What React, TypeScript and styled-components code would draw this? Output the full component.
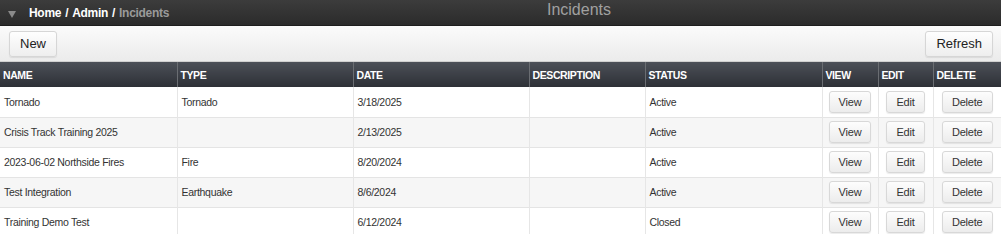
import styled, { createGlobalStyle } from "styled-components";

interface Incident {
  name: string;
  type: string;
  date: string;
  description: string;
  status: string;
}

const incidents: Incident[] = [
  { name: "Tornado", type: "Tornado", date: "3/18/2025", description: "", status: "Active" },
  { name: "Crisis Track Training 2025", type: "", date: "2/13/2025", description: "", status: "Active" },
  { name: "2023-06-02 Northside Fires", type: "Fire", date: "8/20/2024", description: "", status: "Active" },
  { name: "Test Integration", type: "Earthquake", date: "8/6/2024", description: "", status: "Active" },
  { name: "Training Demo Test", type: "", date: "6/12/2024", description: "", status: "Closed" },
];

const columns = [
  { label: "NAME", width: 177 },
  { label: "TYPE", width: 176 },
  { label: "DATE", width: 176 },
  { label: "DESCRIPTION", width: 116 },
  { label: "STATUS", width: 177 },
  { label: "VIEW", width: 56 },
  { label: "EDIT", width: 55 },
  { label: "DELETE", width: 68 },
];

const App = () => {
  return (
    <>
      <GlobalStyle />
      <Page>
        <TopBar>
          <Crumbs>
            <Caret />
            <Crumb>Home</Crumb>
            <Sep>/</Sep>
            <Crumb>Admin</Crumb>
            <Sep>/</Sep>
            <Crumb $current>Incidents</Crumb>
          </Crumbs>
          <Title>Incidents</Title>
        </TopBar>

        <Toolbar>
          <ToolButton>New</ToolButton>
          <ToolButton>Refresh</ToolButton>
        </Toolbar>

        <Table>
          <colgroup>
            {columns.map((c) => (
              <col key={c.label} style={{ width: c.width }} />
            ))}
          </colgroup>
          <thead>
            <tr>
              {columns.map((c) => (
                <HeadCell key={c.label}>{c.label}</HeadCell>
              ))}
            </tr>
          </thead>
          <tbody>
            {incidents.map((item, i) => (
              <Row key={item.name} $striped={i % 2 === 1}>
                <Cell>{item.name}</Cell>
                <Cell>{item.type}</Cell>
                <Cell>{item.date}</Cell>
                <Cell>{item.description}</Cell>
                <Cell>{item.status}</Cell>
                <ActionCell>
                  <RowButton>View</RowButton>
                </ActionCell>
                <ActionCell>
                  <RowButton>Edit</RowButton>
                </ActionCell>
                <ActionCell>
                  <RowButton>Delete</RowButton>
                </ActionCell>
              </Row>
            ))}
          </tbody>
        </Table>
      </Page>
    </>
  );
};

export default App;

const GlobalStyle = createGlobalStyle`
  body {
    margin: 0;
    background: #ffffff;
    font-family: "Liberation Sans", Arial, sans-serif;
  }
`;

const Page = styled.div`
  width: 1001px;
  height: 234px;
  overflow: hidden;
`;

const TopBar = styled.div`
  position: relative;
  height: 25px;
  display: flex;
  align-items: center;
  background: linear-gradient(#3c3c3c, #2b2b2b);
  border-bottom: 1px solid #1e1e1e;
`;

const Crumbs = styled.div`
  display: flex;
  align-items: center;
  gap: 4px;
  padding-left: 8px;
  font-size: 12px;
  letter-spacing: -0.3px;
  font-weight: bold;
`;

const Caret = styled.span`
  width: 0;
  height: 0;
  margin: 3px 9px 0 0;
  border-left: 4px solid transparent;
  border-right: 4px solid transparent;
  border-top: 7px solid #8a8a8a;
`;

const Crumb = styled.span<{ $current?: boolean }>`
  color: ${({ $current }) => ($current ? "#9a9a9a" : "#ffffff")};
`;

const Sep = styled.span`
  color: #ffffff;
`;

const Title = styled.div`
  position: absolute;
  left: 0;
  right: 0;
  top: 0;
  padding-left: 157px;
  text-align: center;
  font-size: 16px;
  line-height: 20px;
  color: #a0a0a0;
  pointer-events: none;
`;

const Toolbar = styled.div`
  height: 35px;
  display: flex;
  align-items: center;
  justify-content: space-between;
  padding: 0 8px 0 9px;
  background: linear-gradient(#fbfbfb, #ebebeb);
  border-bottom: 1px solid #d0d0d0;
`;

const ToolButton = styled.button`
  height: 26px;
  padding: 0 10px;
  font-family: "Liberation Sans", Arial, sans-serif;
  font-size: 13px;
  color: #222222;
  background: linear-gradient(#fefefe, #eeeeee);
  border: 1px solid #d6d6d6;
  border-radius: 3px;
  box-shadow: 0 1px 1px rgba(0, 0, 0, 0.08);
`;

const Table = styled.table`
  width: 1001px;
  table-layout: fixed;
  border-collapse: collapse;
  font-size: 10.5px;
  letter-spacing: -0.3px;
`;

const HeadCell = styled.th`
  height: 25px;
  padding: 0 3px;
  text-align: left;
  font-weight: bold;
  letter-spacing: -0.4px;
  color: #ffffff;
  background: linear-gradient(#4c5058, #2d3036);
  border-left: 1px solid #6a6d72;
  white-space: nowrap;

  &:first-child {
    border-left: none;
  }
`;

const Row = styled.tr<{ $striped: boolean }>`
  height: 30px;
  background: ${({ $striped }) => ($striped ? "#f6f6f6" : "#ffffff")};
  border-bottom: 1px solid #e4e4e4;
`;

const Cell = styled.td`
  padding: 0 4px;
  color: #333333;
  border-left: 1px solid #e6e6e6;
  white-space: nowrap;

  &:first-child {
    border-left: none;
  }
`;

const ActionCell = styled.td`
  padding: 0;
  text-align: center;
  border-left: 1px solid #e6e6e6;
`;

const RowButton = styled.button`
  height: 22px;
  padding: 0 9px;
  font-family: "Liberation Sans", Arial, sans-serif;
  font-size: 11px;
  letter-spacing: -0.2px;
  color: #333333;
  background: linear-gradient(#fdfdfd, #ececec);
  border: 1px solid #d8d8d8;
  border-radius: 3px;
  box-shadow: 0 1px 1px rgba(0, 0, 0, 0.08);
`;
